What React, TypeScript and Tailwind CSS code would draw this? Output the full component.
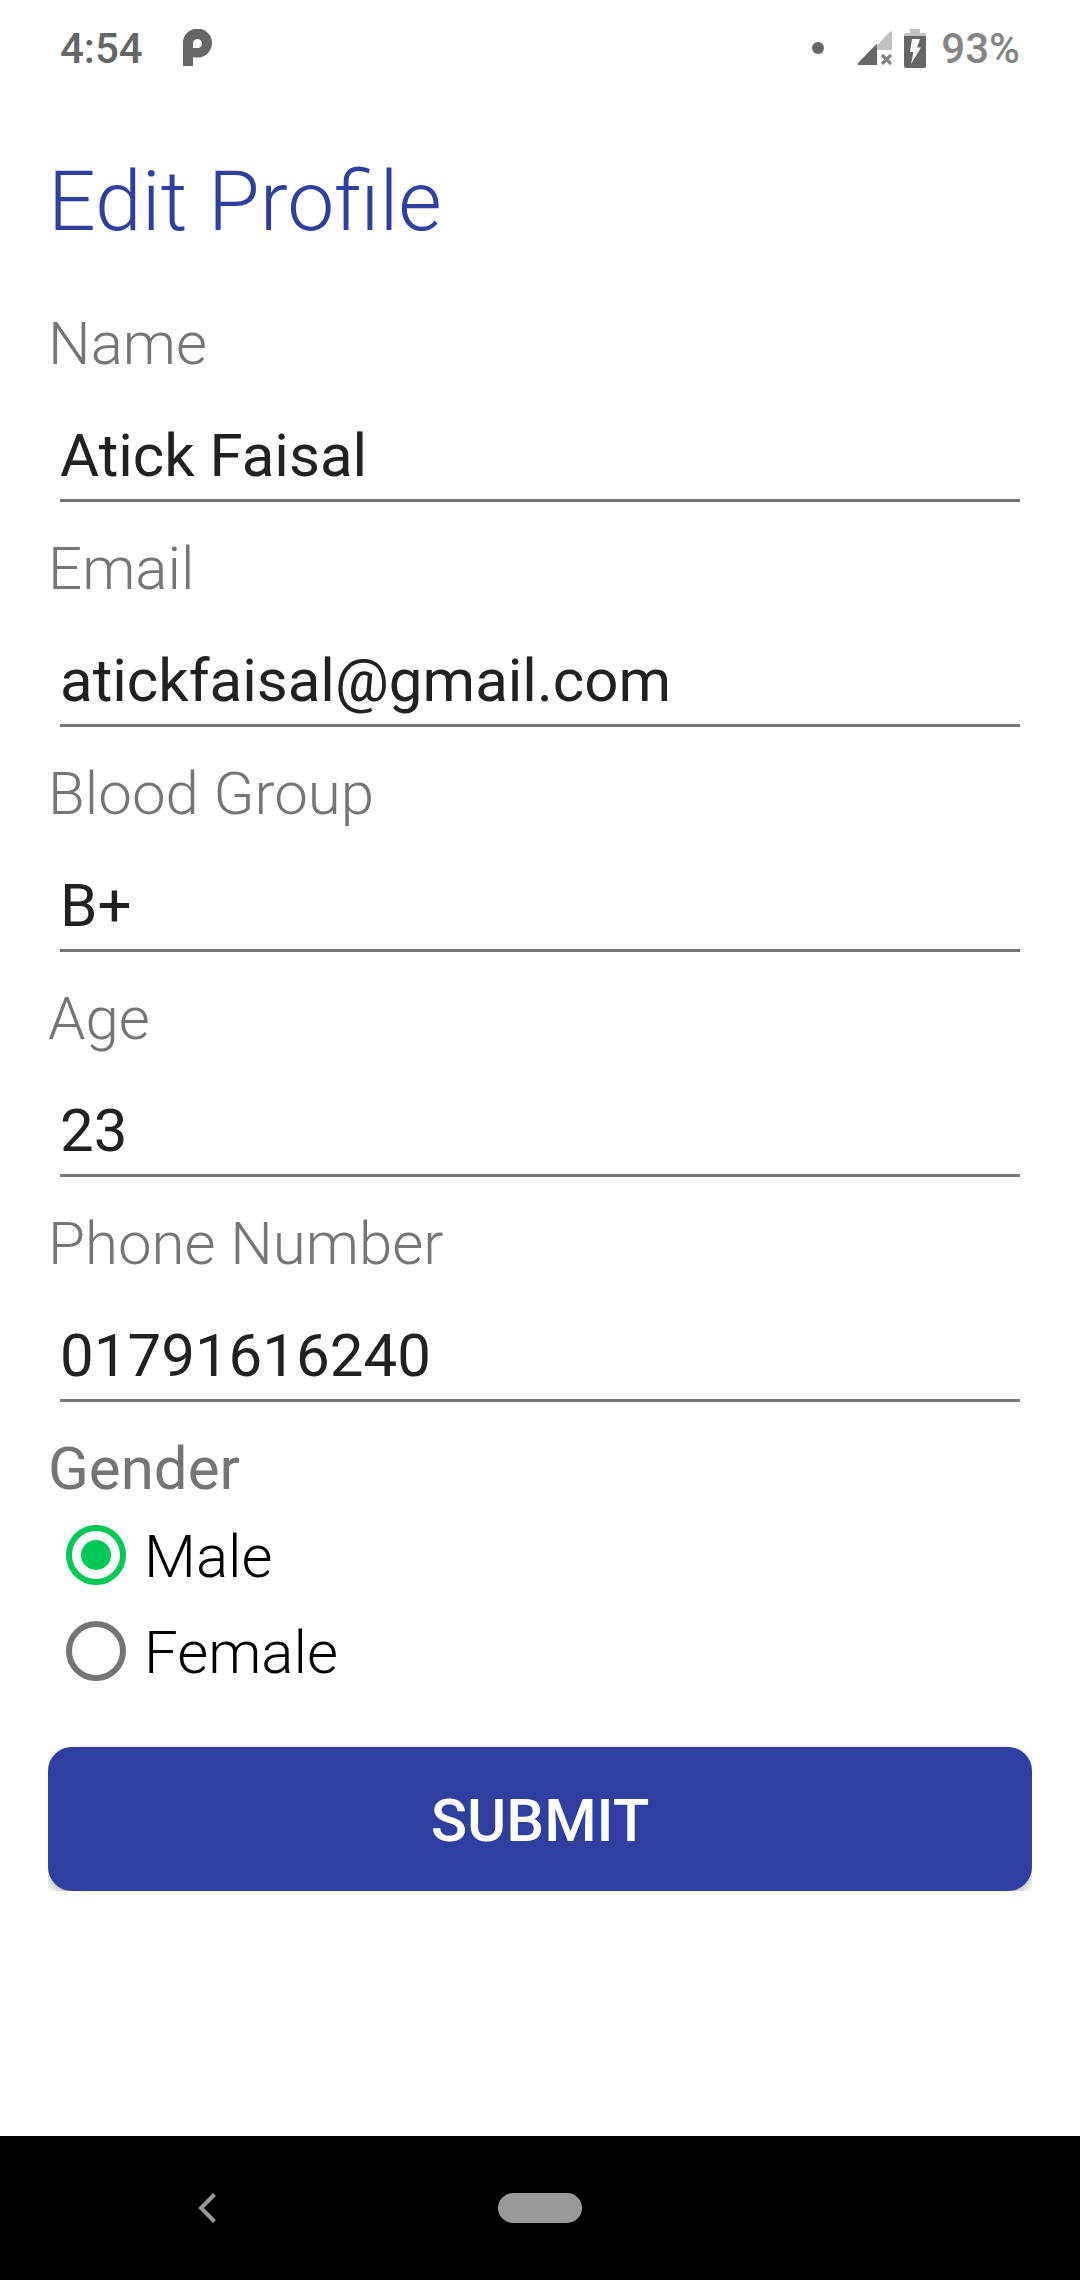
import React from "react";

type Field = { id: string; label: string; value: string; type: string };

const fields: Field[] = [
  { id: "name", label: "Name", value: "Atick Faisal", type: "text" },
  { id: "email", label: "Email", value: "atickfaisal@gmail.com", type: "email" },
  { id: "blood", label: "Blood Group", value: "B+", type: "text" },
  { id: "age", label: "Age", value: "23", type: "text" },
  { id: "phone", label: "Phone Number", value: "01791616240", type: "tel" },
];

function StatusBar() {
  return (
    <header className="flex h-24 items-center px-[60px] text-[42px] font-medium text-[#666666]">
      <span>4:54</span>
      <svg className="ml-10 h-[38px] w-[30px]" viewBox="0 0 30 38" aria-hidden="true">
        <path
          fillRule="evenodd"
          fill="#666666"
          d="M0 37V14.5A14.5 14.5 0 1 1 15 28.500H10V37ZM10 19H14.500A4.500 4.500 0 1 0 10 14.500Z"
        />
      </svg>
      <span className="ml-auto h-3 w-3 rounded-full bg-[#666666]" />
      <svg className="ml-[34px] h-[34px] w-[34px]" viewBox="0 0 34 34" aria-hidden="true">
        <path d="M19 14.500 32 .6Q34-.6 34 1.500V19H19Z" fill="#c2c2c2" />
        <path d="M19 12.500V34H1Q-1 34 .5 31.500Z" fill="#666666" />
        <path d="m24 24 9 9m0-9-9 9" stroke="#858585" strokeWidth="3.2" />
      </svg>
      <svg className="ml-3 h-[39px] w-[22px]" viewBox="0 0 22 39" aria-hidden="true">
        <path d="M6 0H16V4H20Q22 4 22 6V8H0V6Q0 4 2 4H6Z" fill="#c2c2c2" />
        <path d="M0 7H22V37Q22 39 20 39H2Q0 39 0 37Z" fill="#666666" />
        <path d="M8 10H16L13 18.500H17L7 35 9.500 23H6Z" fill="#ffffff" />
      </svg>
      <span className="ml-[15px] text-[#858585]">93%</span>
    </header>
  );
}

function TextField({ id, label, value, type }: Field) {
  return (
    <div className="flex flex-col pb-8">
      <label htmlFor={id} className="text-[60px] font-light leading-[70px] text-[#757575]">
        {label}
      </label>
      <div className="px-3 pt-8">
        <input
          id={id}
          type={type}
          defaultValue={value}
          className="block h-[91px] w-full border-b-[3px] border-[#757575] text-[60px] text-[#212121] outline-none"
        />
      </div>
    </div>
  );
}

function RadioOption({ label, checked }: { label: string; checked?: boolean }) {
  return (
    <label className="flex h-24 items-center gap-[18px] pl-[18px] text-[60px] font-light leading-[70px] text-black">
      <input
        type="radio"
        name="gender"
        value={label}
        defaultChecked={checked}
        className="grid size-[60px] shrink-0 appearance-none place-items-center rounded-full border-6 border-[#757575] before:size-[30px] before:rounded-full before:content-[''] checked:border-[#00c853] checked:before:bg-[#00c853]"
      />
      <span className="pt-1">{label}</span>
    </label>
  );
}

function NavigationBar() {
  return (
    <nav className="grid h-36 grid-cols-[1fr_auto_1fr] items-center bg-black">
      <button type="button" aria-label="Back" className="ml-[159px] flex size-24 items-center justify-center">
        <svg className="h-[30px] w-[18px]" viewBox="0 0 18 30" aria-hidden="true">
          <path d="M16.500 1.500 3 15 16.500 28.500" fill="none" stroke="#999999" strokeWidth="4" />
        </svg>
      </button>
      <button type="button" aria-label="Home" className="h-[30px] w-[84px] rounded-full bg-[#999999]" />
    </nav>
  );
}

export default function App() {
  return (
    <div className="flex min-h-screen flex-col bg-white font-['Roboto',sans-serif]">
      <StatusBar />
      <main className="flex-1 px-12 pt-[50px]">
        <h1 className="text-[84px] font-light leading-[112px] text-[#303f9f]">Edit Profile</h1>
        <form className="mt-[51px]">
          {fields.map((f) => (
            <TextField key={f.id} {...f} />
          ))}
          <fieldset>
            <legend className="text-[60px] leading-[70px] text-[#757575]">Gender</legend>
            <div className="pt-[3px]">
              <RadioOption label="Male" checked />
              <RadioOption label="Female" />
            </div>
          </fieldset>
          <div className="mt-12 overflow-hidden">
            <button
              type="button"
              className="block h-36 w-full rounded-3xl bg-[#303f9f] pt-1 text-[60px] font-medium text-white shadow-[0_4px_10px_rgba(0,0,0,0.3)]"
            >
              SUBMIT
            </button>
          </div>
        </form>
      </main>
      <NavigationBar />
    </div>
  );
}
